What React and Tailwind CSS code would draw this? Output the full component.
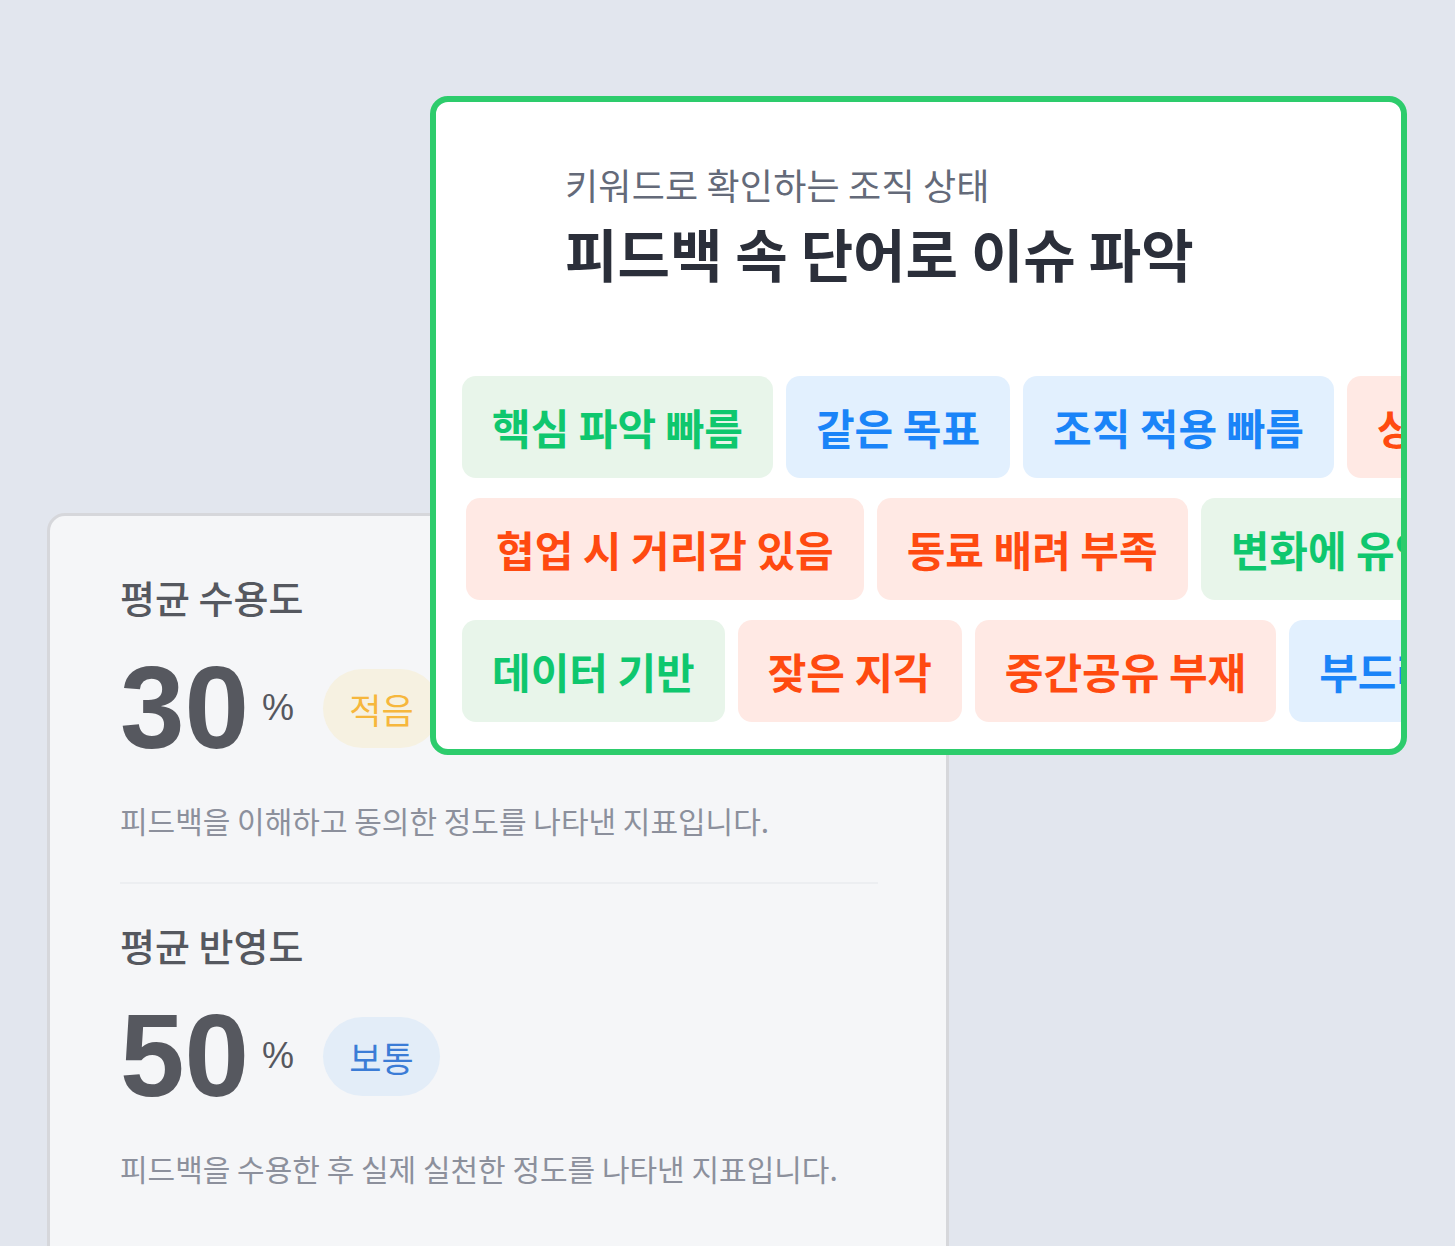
import React from "react";

const tone = {
  g: "bg-[#e8f5ea] text-[#0fc76e]",
  b: "bg-[#e2f0fe] text-[#1a84f8]",
  r: "bg-[#ffe9e4] text-[#ff4a10]",
};

const rows = [
  { ml: "ml-[26px]", tags: [["핵심 파악 빠름", "g"], ["같은 목표", "b"], ["조직 적용 빠름", "b"], ["상호 존중 부족", "r"]] },
  { ml: "ml-[30px]", tags: [["협업 시 거리감 있음", "r"], ["동료 배려 부족", "r"], ["변화에 유연함", "g"]] },
  { ml: "ml-[26px]", tags: [["데이터 기반", "g"], ["잦은 지각", "r"], ["중간공유 부재", "r"], ["부드러운 소통", "b"]] },
];

function Tag({ text, t }) {
  return (
    <div
      className={`shrink-0 h-[102px] px-[30px] flex items-center rounded-[14px] whitespace-nowrap text-[42px] font-semibold leading-none ${tone[t]}`}
    >
      {text}
    </div>
  );
}

function Metric({ title, value, badge, badgeCls, desc }) {
  return (
    <div className="flex flex-col">
      <div className="h-[44px] leading-[44px] text-[38px] font-medium text-[#55585f]">{title}</div>
      <div className="mt-[49px] h-[80px] flex items-center">
        <span className="font-['Liberation_Sans',sans-serif] font-bold text-[116px] leading-none text-[#56585f]">
          {value}
        </span>
        <span className="ml-[13px] font-['Liberation_Sans',sans-serif] text-[36px] leading-none text-[#56585f]">%</span>
        <span className={`ml-[29px] h-[79px] w-[117px] shrink-0 rounded-full flex items-center justify-center text-[35px] leading-none ${badgeCls}`}>
          {badge}
        </span>
      </div>
      <div className="mt-[52px] h-[40px] leading-[40px] text-[30px] text-[#8c909c] whitespace-nowrap">{desc}</div>
    </div>
  );
}

export default function App() {
  return (
    <div className="relative w-[1455px] h-[1246px] overflow-hidden bg-[#e2e6ee] font-['Noto_Sans_CJK_KR','Noto_Sans',sans-serif]">
      {/* left metrics card */}
      <div className="absolute left-[47px] top-[513px] w-[902px] h-[780px] rounded-[18px] border-[3px] border-[#d6d7db] bg-[#f5f6f8] pl-[70px] pr-[68px] pt-[59px]">
        <Metric
          title="평균 수용도"
          value="30"
          badge="적음"
          badgeCls="bg-[#f6f1e1] text-[#f6b73c]"
          desc="피드백을 이해하고 동의한 정도를 나타낸 지표입니다."
        />
        <div className="mt-[42px] h-[2px] bg-[#eceef1]" />
        <div className="mt-[39px]">
          <Metric
            title="평균 반영도"
            value="50"
            badge="보통"
            badgeCls="bg-[#e3edf8] text-[#3b7cd6]"
            desc="피드백을 수용한 후 실제 실천한 정도를 나타낸 지표입니다."
          />
        </div>
      </div>

      {/* keyword card */}
      <div className="absolute left-[430px] top-[96px] w-[977px] h-[659px] rounded-[18px] border-[6px] border-[#2dcc6c] bg-white overflow-hidden flex flex-col">
        <div className="pl-[129px] pt-[60px]">
          <div className="h-[44px] leading-[44px] text-[36px] text-[#646a79] tracking-[0.2px]">키워드로 확인하는 조직 상태</div>
          <div className="mt-[14px] h-[64px] leading-[64px] text-[57px] font-bold text-[#2b2f3a]">
            피드백 속 단어로 이슈 파악
          </div>
        </div>
        <div className="mt-[92px] flex flex-col gap-[20px]">
          {rows.map((r, i) => (
            <div key={i} className={`flex gap-[13px] ${r.ml}`}>
              {r.tags.map(([text, t]) => (
                <Tag key={text} text={text} t={t} />
              ))}
            </div>
          ))}
        </div>
      </div>
    </div>
  );
}
